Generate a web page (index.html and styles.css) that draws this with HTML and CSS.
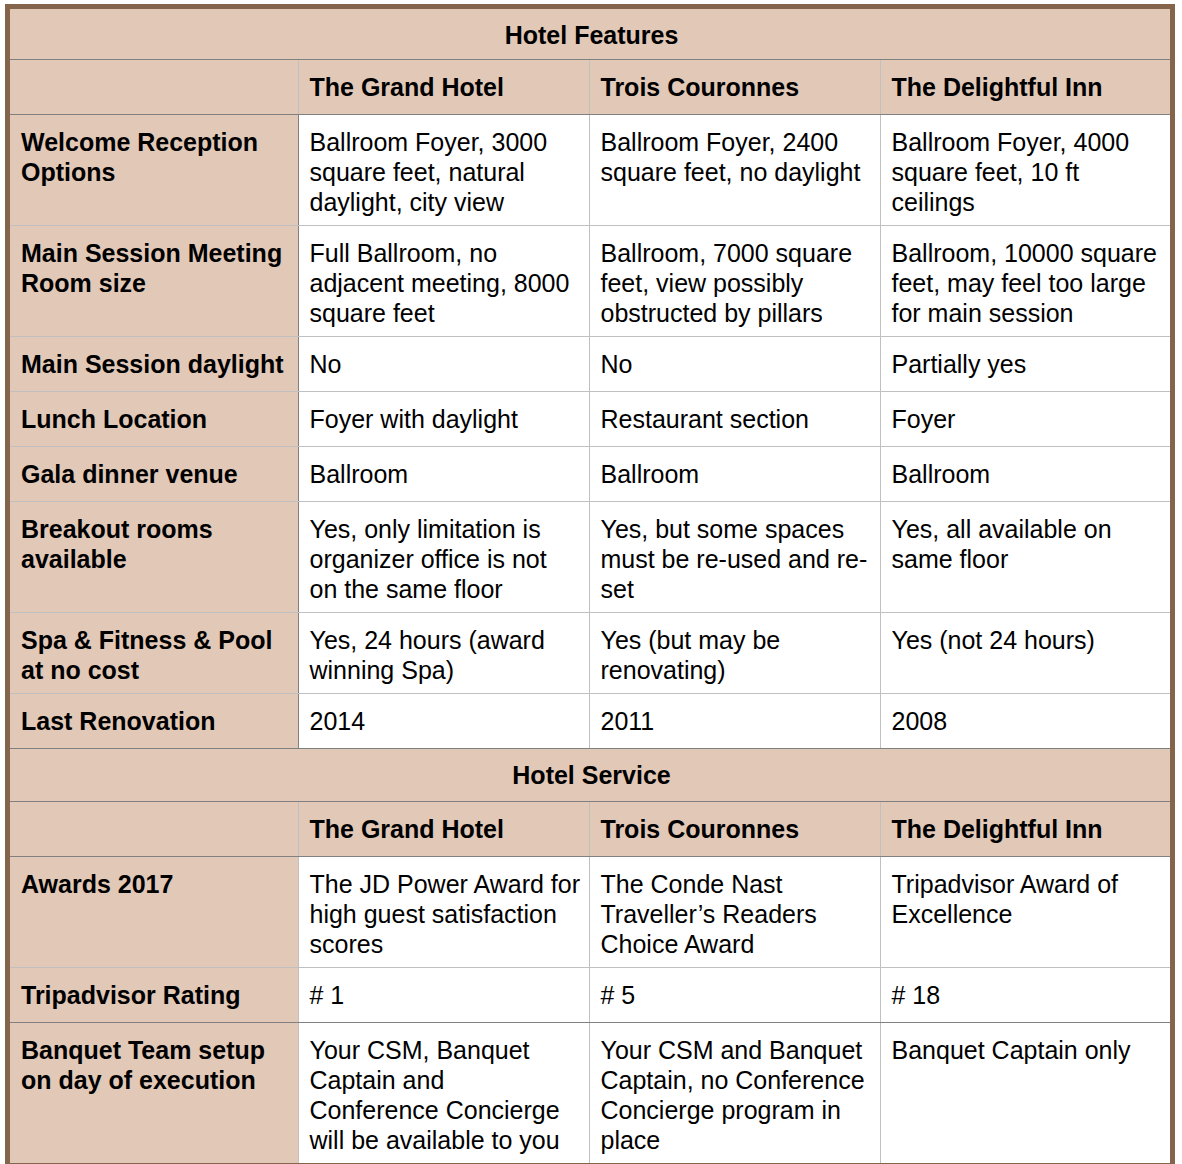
FILE: index.html
```html
<!DOCTYPE html>
<html>
<head>
<meta charset="utf-8">
<link rel="stylesheet" href="styles.css">
</head>
<body>
<div class="frame">
<table class="grid">
<colgroup>
<col class="c1"><col class="c2"><col class="c3"><col class="c4">
</colgroup>
<tbody>
<tr class="title first"><th colspan="4">Hotel Features</th></tr>
<tr class="head sep"><th></th><th>The Grand Hotel</th><th>Trois Couronnes</th><th>The Delightful Inn</th></tr>
<tr class="feat"><th>Welcome Reception Options</th><td>Ballroom Foyer, 3000 square feet, natural daylight, city view</td><td>Ballroom Foyer, 2400 square feet, no daylight</td><td>Ballroom Foyer, 4000 square feet, 10 ft ceilings</td></tr>
<tr class="feat"><th>Main Session Meeting Room size</th><td>Full Ballroom, no adjacent meeting, 8000 square feet</td><td>Ballroom, 7000 square feet, view possibly obstructed by pillars</td><td>Ballroom, 10000 square feet, may feel too large for main session</td></tr>
<tr class="feat"><th>Main Session daylight</th><td>No</td><td>No</td><td>Partially yes</td></tr>
<tr class="feat"><th>Lunch Location</th><td>Foyer with daylight</td><td>Restaurant section</td><td>Foyer</td></tr>
<tr class="feat"><th>Gala dinner venue</th><td>Ballroom</td><td>Ballroom</td><td>Ballroom</td></tr>
<tr class="feat"><th>Breakout rooms available</th><td>Yes, only limitation is organizer office is not on the same floor</td><td>Yes, but some spaces must be re-used and re-set</td><td>Yes, all available on same floor</td></tr>
<tr class="feat"><th>Spa &amp; Fitness &amp; Pool at no cost</th><td>Yes, 24 hours (award winning Spa)</td><td>Yes (but may be renovating)</td><td>Yes (not 24 hours)</td></tr>
<tr class="feat sep"><th>Last Renovation</th><td>2014</td><td>2011</td><td>2008</td></tr>
<tr class="title second"><th colspan="4">Hotel Service</th></tr>
<tr class="head sep"><th></th><th>The Grand Hotel</th><th>Trois Couronnes</th><th>The Delightful Inn</th></tr>
<tr class="serv"><th>Awards 2017</th><td>The JD Power Award for high guest satisfaction scores</td><td>The Conde Nast Traveller’s Readers Choice Award</td><td>Tripadvisor Award of Excellence</td></tr>
<tr class="serv sep"><th>Tripadvisor Rating</th><td># 1</td><td># 5</td><td># 18</td></tr>
<tr class="serv"><th>Banquet Team setup on day of execution</th><td>Your CSM, Banquet Captain and Conference Concierge will be available to you</td><td>Your CSM and Banquet Captain, no Conference Concierge program in place</td><td>Banquet Captain only</td></tr>
</tbody>
</table>
</div>
</body>
</html>
```

FILE: styles.css
```css
html, body {
  margin: 0;
  padding: 0;
  background: #ffffff;
}

body {
  padding: 4px 0 0 5px;
  font-family: "Liberation Sans", Arial, Helvetica, sans-serif;
  color: #000000;
}

.frame {
  width: 1160px;
  border: 5px solid #84654b;
  background: #ffffff;
}

.grid {
  width: 1160px;
  table-layout: fixed;
  border-collapse: collapse;
  border-style: hidden;
}

.c1 { width: 288px; }
.c2 { width: 291px; }
.c3 { width: 291px; }
.c4 { width: 290px; }

.grid th,
.grid td {
  border: 1px solid #c0c0c0;
  padding: 12px 8px 8px 11px;
  font-size: 25px;
  line-height: 30px;
  text-align: left;
  vertical-align: top;
}

.grid th {
  font-weight: bold;
  background: #e2c8b7;
}

.grid td {
  font-weight: normal;
  background: #ffffff;
}

.grid tr.title th {
  text-align: center;
  border-bottom-color: #808080;
}

.grid tr.title.first th {
  padding-top: 11px;
  padding-bottom: 9px;
}

.grid tr.title.second th {
  padding-top: 11px;
  padding-bottom: 11px;
}

.grid tr.head th,
.grid tr.feat th,
.grid tr.feat td,
.grid tr.serv th,
.grid tr.serv td {
  height: 34px;
}

.grid tr.feat th {
  border-right-color: #808080;
}

.grid tr.sep th,
.grid tr.sep td {
  border-bottom-color: #808080;
}
```
